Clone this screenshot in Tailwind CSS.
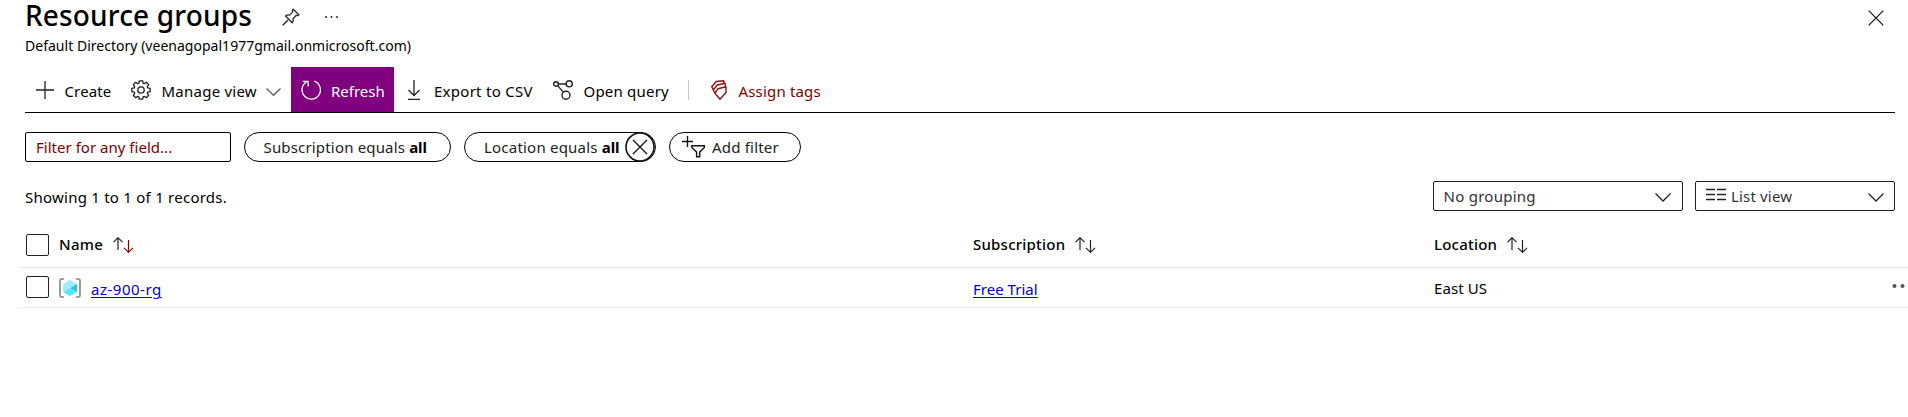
<!DOCTYPE html>
<html lang="en">
<head>
<meta charset="utf-8">
<title>Resource groups</title>
<script src="https://cdn.jsdelivr.net/npm/@tailwindcss/browser@4"></script>
</head>
<body class="h-[417px] overflow-hidden bg-white font-['Noto_Sans','Open_Sans',sans-serif] text-[15px] leading-5 whitespace-nowrap text-black">

<header>
  <div class="flex h-[30px] items-center pl-[25px]">
    <h1 class="w-[257px] text-[28px] leading-[30px] font-medium tracking-[0.150px]">Resource groups</h1>
    <svg class="mt-1 size-[18px]" viewBox="0 0 18 18" fill="none" stroke="#222" stroke-width="1.300"><path d="M.8 17.200 6 12M11.200 1.200l5.600 5.600-1 .8-1.700-.1-3 3.100c.4 1.600.1 3-.9 4.100L3.600 8c1.100-1 2.500-1.300 4-.9l3-3-.2-2z"/></svg>
    <svg class="mt-1 ml-6 h-2 w-4" viewBox="0 0 16 8" fill="#111"><circle cx="2" cy="4" r=".9"/><circle cx="7.500" cy="4" r=".9"/><circle cx="13" cy="4" r=".9"/></svg>
    <svg class="mt-[5px] mr-6 ml-auto size-4" viewBox="0 0 16 16" stroke="#111" stroke-width="1.200"><path d="m.7.7 14.600 14.600M15.300.7.7 15.300"/></svg>
  </div>
  <p class="flex h-[31px] items-center pl-[25px] text-[14px] tracking-[0.020px]">Default Directory (veenagopal1977gmail.onmicrosoft.com)</p>
</header>

<nav class="mt-1.5 mr-[13px] ml-[25px] flex h-[46px] items-center border-b border-black">
  <div class="flex items-center pl-[11px]">
    <svg class="mr-[10.500px] size-[18px]" viewBox="0 0 18 18" stroke="#222" stroke-width="1.300"><path d="M9 0v18M0 9h18"/></svg>
    <span class="w-[66px] pt-[3px] tracking-[0.140px]">Create</span>
  </div>
  <div class="flex items-center">
    <svg class="mr-[11px] size-5" viewBox="0 0 20 20" fill="none" stroke="#222" stroke-width="1.300" stroke-linejoin="round"><path d="m8.300.8h3.400l.4 2.400 1.200.5 2-1.400 2.400 2.400-1.400 2 .5 1.200 2.400.4v3.400l-2.400.4-.5 1.200 1.400 2-2.400 2.400-2-1.400-1.200.5-.4 2.400H8.300l-.4-2.400-1.200-.5-2 1.400-2.400-2.400 1.400-2-.5-1.200-2.400-.4V8.300l2.400-.4.5-1.200-1.400-2 2.400-2.400 2 1.400 1.200-.5z"/><circle cx="10" cy="10" r="3.200"/></svg>
    <span class="w-[104.500px] pt-[3px] tracking-[0.240px]">Manage view</span>
    <svg class="mt-1 mr-[9.500px] h-2 w-[15px]" viewBox="0 0 15 8" fill="none" stroke="#555" stroke-width="1.200"><path d="m.5.5 7 6.800 7-6.800"/></svg>
  </div>
  <div class="flex h-[45px] w-[103px] items-center bg-[#800080] pl-2.5 text-white">
    <svg class="mr-[10.500px] size-5" viewBox="0 0 20 20" fill="none" stroke="#fff" stroke-width="1.300"><path d="M13.200 1.200A9.200 9.200 0 1 1 5.500 2M1.800 1.300h5.300v5.200"/></svg>
    <span class="pt-[3px] tracking-[0.000px]">Refresh</span>
  </div>
  <div class="flex items-center pl-3.5">
    <svg class="mr-[14.500px] h-5 w-3" viewBox="0 0 12 20" fill="none" stroke="#222" stroke-width="1.300"><path d="M6 0v15.500M.5 10 6 15.500l5.500-5.500M0 19.300h12"/></svg>
    <span class="w-[118.500px] pt-[3px] tracking-[0.270px]">Export to CSV</span>
  </div>
  <div class="flex items-center">
    <svg class="mr-[11px] size-5" viewBox="0 0 20 20" fill="none" stroke="#222" stroke-width="1.400"><circle cx="3" cy="4" r="2.300"/><circle cx="16.200" cy="3.800" r="3.100"/><circle cx="13" cy="15.200" r="4"/><path d="M5.300 4h7.800M4.700 5.600l5.600 6.500"/></svg>
    <span class="w-[104px] pt-[3px] tracking-[0.200px]">Open query</span>
  </div>
  <div class="h-5 w-px bg-[#c8c6c4]"></div>
  <div class="flex items-center pl-[22px] text-[#800000]">
    <svg class="mr-3 h-5 w-4" viewBox="0 0 16 20" fill="none" stroke="#8b1414" stroke-width="1.400" stroke-linejoin="round"><path d="m4 13.200 3-4.500 8-2v5.800L9 19.300zM4 13.200 2.300 10 6.200 5l8-1.700v3.500M2.300 10 .8 6.800l4.400-5.300L12.800.7v2.800"/></svg>
    <span class="pt-[3px] tracking-[0.170px]">Assign tags</span>
  </div>
</nav>

<section class="mt-[19px] ml-[25px] flex h-[30px]">
  <div class="mr-[13px] flex w-[206px] items-center rounded-[2px] border border-black pl-2.5 text-[#800000]"><span class="-mt-px tracking-[0.020px]">Filter for any field...</span></div>
  <div class="mr-[13px] flex w-[207px] items-center rounded-full border border-black pl-[18.500px] text-[#222]"><span class="-mt-px tracking-[0.170px]">Subscription equals <b class="tracking-[-0.100px] text-black">all</b></span></div>
  <div class="mr-[13px] flex w-[192px] items-center rounded-full border border-black pl-[19px] text-[#222]">
    <span class="-mt-px w-[141.500px] tracking-[0.210px]">Location equals <b class="tracking-[-0.100px] text-black">all</b></span>
    <svg class="size-[30px] shrink-0" viewBox="0 0 30 30" fill="none" stroke="#111"><circle cx="15" cy="15" r="14" stroke-width="1.600"/><path stroke-width="1.300" d="m8 8 14 14M22 8 8 22"/></svg>
  </div>
  <div class="flex w-[132px] items-center rounded-full border border-black pl-3 text-[#222]">
    <svg class="mr-[7px] h-[22px] w-[23px]" viewBox="0 0 23 22" fill="none" stroke="#111" stroke-width="1.400"><path d="M5.500 0v11M0 5.500h11M9.800 9.700h12.500v1.700l-4.600 4.700v4.700h-3.100v-4.700L9.800 11.400z"/></svg>
    <span class="-mt-px tracking-[0.200px]">Add filter</span>
  </div>
</section>

<section class="mt-[19px] mr-[13px] ml-[25px] flex h-[30px] items-center">
  <span class="pt-px tracking-[0.240px]">Showing 1 to 1 of 1 records.</span>
  <div class="mr-3 ml-auto flex h-[30px] w-[250px] items-center justify-between rounded-[2px] border border-[#222] pr-[11px] pl-[9.500px] text-[#333]">
    <span class="-mt-px tracking-[0.260px]">No grouping</span>
    <svg class="mt-0.5 h-[9px] w-4" viewBox="0 0 16 9" fill="none" stroke="#222" stroke-width="1.300"><path d="m.5.5 7.500 7.500L15.500.5"/></svg>
  </div>
  <div class="flex h-[30px] w-[200px] items-center rounded-[2px] border border-[#222] pr-2.5 pl-2.5 text-[#333]">
    <svg class="mr-[5px] mb-1 h-[13px] w-5" viewBox="0 0 20 13" stroke="#222" stroke-width="1.400"><path d="M0 1.500h9M11 1.500h9M0 6.500h9M11 6.500h9M0 11.500h9M11 11.500h9"/></svg>
    <span class="-mt-px tracking-[0.170px]">List view</span>
    <svg class="mt-0.5 ml-auto h-[9px] w-4" viewBox="0 0 16 9" fill="none" stroke="#222" stroke-width="1.300"><path d="m.5.5 7.500 7.500L15.500.5"/></svg>
  </div>
</section>

<main class="mt-[13px] ml-[19px]">
  <div class="grid h-[44px] grid-cols-[954px_461px_1fr] border-b border-[#e6e6e6] pt-[9px] font-medium">
    <div class="flex h-6 items-center pl-[7px]">
      <span class="mr-2.5 mb-px h-[22px] w-[23px] rounded-[2px] border border-[#222]"></span>
      <span class="-mt-0.5 w-[53.500px] tracking-[0.300px]">Name</span>
      <svg class="h-4 w-[21px]" viewBox="0 0 21 16" fill="none" stroke-width="1.200"><path stroke="#222" d="M5 13V.8M.5 5.200 5 .7l4.500 4.500"/><path stroke="#8b0000" d="M15.500 3v12.200M11 10.800l4.500 4.500 4.500-4.500"/></svg>
    </div>
    <div class="flex h-6 items-center">
      <span class="-mt-0.5 w-[101.500px] tracking-[0.220px]">Subscription</span>
      <svg class="h-4 w-[21px]" viewBox="0 0 21 16" fill="none" stroke="#222" stroke-width="1.200"><path d="M5 13V.8M.5 5.200 5 .7l4.500 4.500M15.500 3v12.200M11 10.800l4.500 4.500 4.500-4.500"/></svg>
    </div>
    <div class="flex h-6 items-center">
      <span class="-mt-0.5 w-[72.500px] tracking-[0.220px]">Location</span>
      <svg class="h-4 w-[21px]" viewBox="0 0 21 16" fill="none" stroke="#222" stroke-width="1.200"><path d="M5 13V.8M.5 5.200 5 .7l4.500 4.500M15.500 3v12.200M11 10.800l4.500 4.500 4.500-4.500"/></svg>
    </div>
  </div>
  <div class="grid h-10 grid-cols-[954px_461px_1fr] border-b border-[#eee]">
    <div class="flex items-center pl-[7px]">
      <span class="mr-2.5 mb-px h-[22px] w-[23px] rounded-[2px] border border-[#222]"></span>
      <svg class="mt-px mr-2.5 h-5 w-[22px]" viewBox="0 0 22 20"><path d="M4.800 1H3q-2 0-2 2v14q0 2 2 2h1.800M17.200 1H19q2 0 2 2v14q0 2-2 2h-1.800" fill="none" stroke="#999" stroke-width="1.900"/><path fill="#9cebff" d="m11 2 7 4-7 4.200L4 6z"/><path fill="#9cebff" d="m4 6 7 4.200L4 14z"/><path fill="#32bedd" d="m18 6-7 4.200L18 14z"/><path fill="#50e6ff" d="m4 14 7-3.800L18 14l-7 4z"/></svg>
      <a class="pt-[3px] tracking-[0.510px] text-[#0000c8] underline decoration-1 underline-offset-2">az-900-rg</a>
    </div>
    <div class="flex items-center"><a class="pt-[3px] tracking-[0.020px] text-[#0000c8] underline decoration-1 underline-offset-2">Free Trial</a></div>
    <div class="flex items-center"><span class="pt-px tracking-[0.100px]">East US</span>
      <svg class="mb-[3px] ml-auto h-1 w-4" viewBox="0 0 16 4" fill="#555"><circle cx="2.500" cy="2" r="2"/><circle cx="10.500" cy="2" r="2"/></svg>
    </div>
  </div>
</main>
</body>
</html>
